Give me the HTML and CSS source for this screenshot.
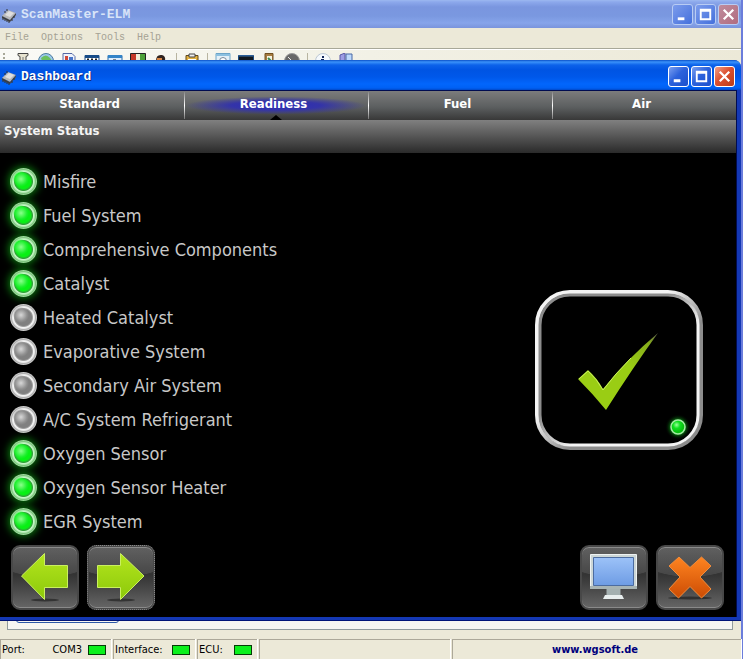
FILE: index.html
```html
<!DOCTYPE html>
<html lang="en">
  <head>
    <meta charset="utf-8">
    <title>ScanMaster-ELM</title>
    <meta name="viewport" content="width=device-width, initial-scale=1">
    <link rel="stylesheet" href="styles.css">
  </head>
  <body>
    <!-- shared gradients and symbols -->
    <svg class="defs" width="0" height="0" aria-hidden="true">
      <defs>
        <linearGradient id="green" x1="0" y1="0" x2="0" y2="1">
          <stop offset="0" stop-color="#b4e61e"/>
          <stop offset="1" stop-color="#8cc80a"/>
        </linearGradient>
        <linearGradient id="orange" x1="0" y1="0" x2="0" y2="1">
          <stop offset="0" stop-color="#ff8420"/>
          <stop offset="1" stop-color="#cc4c04"/>
        </linearGradient>
        <linearGradient id="screen" x1="0" y1="0" x2="0" y2="1">
          <stop offset="0" stop-color="#9cc2f8"/>
          <stop offset="1" stop-color="#6e9ce4"/>
        </linearGradient>
        <linearGradient id="bevelOut" x1="0" y1="0" x2="1" y2="1">
          <stop offset=".4" stop-color="#f4f4f4"/>
          <stop offset=".6" stop-color="#8c8c8c"/>
        </linearGradient>
        <linearGradient id="bevelIn" x1="0" y1="0" x2="1" y2="1">
          <stop offset=".4" stop-color="#8c8c8c"/>
          <stop offset=".6" stop-color="#f4f4f4"/>
        </linearGradient>
        <linearGradient id="tick" x1="0" y1="1" x2="1" y2="0">
          <stop offset=".6" stop-color="#9acd14"/>
          <stop offset=".88" stop-color="#86ac1c"/>
          <stop offset="1" stop-color="#5a5a50"/>
        </linearGradient>
        <radialGradient id="ball" cx=".4" cy=".35">
          <stop offset="0" stop-color="#9cff9c"/>
          <stop offset=".5" stop-color="#10e020"/>
          <stop offset="1" stop-color="#08c010"/>
        </radialGradient>
        <radialGradient id="glow">
          <stop offset=".5" stop-color="#0c8c14"/>
          <stop offset="1" stop-color="#000" stop-opacity="0"/>
        </radialGradient>
        <symbol id="chip" viewBox="0 0 16 16">
          <path d="M1 9l6-6 8 3-6 7z" fill="#b8b8b8"/>
          <path d="M1 9l8 4v2l-8-4zM9 13l6-7v2l-6 7z" fill="#4a4a4a"/>
          <path d="M4 8l4-4 5 2-4 4z" fill="#dedede"/>
          <path d="M2 10v3M4 11v3M6 12v3M8 13v3M11 12v2M13 9v2M4 6V4M6 4V2" stroke="#333"/>
        </symbol>
        <symbol id="min" viewBox="0 0 20 20"><path d="M5 13h7v3H5z" fill="#fff"/></symbol>
        <symbol id="max" viewBox="0 0 20 20"><path d="M4 4h12v12H4zM6 7v7h8V7z" fill="#fff" fill-rule="evenodd"/></symbol>
        <symbol id="close" viewBox="0 0 20 20"><path d="M5 5l10 10M15 5L5 15" stroke="#fff" stroke-width="2.4"/></symbol>
      </defs>
    </svg>

    <div class="app">
      <div class="titlebar inactive">
        <svg class="chip" width="16" height="16"><use href="#chip"/></svg>
        <h1>ScanMaster-ELM</h1>
        <button class="winbtn" aria-label="Minimize"><svg><use href="#min"/></svg></button>
        <button class="winbtn" aria-label="Maximize"><svg><use href="#max"/></svg></button>
        <button class="winbtn close" aria-label="Close"><svg><use href="#close"/></svg></button>
      </div>
      <div class="menu">
        <button>File</button>
        <button>Options</button>
        <button>Tools</button>
        <button>Help</button>
      </div>
      <div class="toolbar">
        <span class="grip"></span>
        <button aria-label="Connect"><svg viewBox="0 0 16 16"><path d="M3 .5h10v2l-2 1v12H5V3.500l-2-1z" fill="#e8e4d0" stroke="#444"/><path d="M8 4v12" stroke="#777"/></svg></button>
        <button aria-label="Globe"><svg viewBox="0 0 16 16"><circle cx="8" cy="8" r="7.500" fill="#9cc8ec" stroke="#4c7c9c"/><path d="M3 5q5-5 9 0l2 3H4z" fill="#6cc060"/></svg></button>
        <button aria-label="Report"><svg viewBox="0 0 16 16"><path d="M2 .5h9l3 3V16H2z" fill="#eef2fc" stroke="#5468a4"/><path d="M4 3h3v4H4z" fill="#d04838"/><path d="M8 4h4v3H8z" fill="#4874c8"/></svg></button>
        <button aria-label="Data grid"><svg viewBox="0 0 16 16"><path d="M1 2.500h14V15H1z" fill="#fff" stroke="#184c88"/><path d="M1 2h14v3H1z" fill="#184c88"/><path d="M3 6.500h2M7 6.500h2M11 6.500h2" stroke="#222" stroke-width="2"/></svg></button>
        <button aria-label="Window"><svg viewBox="0 0 16 16"><path d="M1 2.500h14V15H1z" fill="#dcecfc" stroke="#2468a8"/><path d="M1 2h14v3H1z" fill="#3484c8"/><path d="M6 7h3" stroke="#222"/></svg></button>
        <button aria-label="Dashboard"><svg viewBox="0 0 16 16"><path d="M.5.5h15V15H.5z" fill="#c43828" stroke="#222"/><path d="M6 1h5v6H6z" fill="#f0ecd8"/><path d="M10 1h5v7h-5z" fill="#4ca038"/></svg></button>
        <button aria-label="User"><svg viewBox="0 0 16 16"><path d="M3 8q0-7 6-6 4 1 3 6z" fill="#302420"/><path d="M4 5h5v6H4z" fill="#d88444"/></svg></button>
        <span class="sep"></span>
        <button aria-label="Clipboard"><svg viewBox="0 0 16 16"><path d="M2 2.500h12V16H2z" fill="#e0b040" stroke="#604818"/><path d="M5 1h6v3H5z" fill="#eee" stroke="#444"/><path d="M4 6h8v9H4z" fill="#fff"/></svg></button>
        <span class="sep"></span>
        <button aria-label="Search"><svg viewBox="0 0 16 16"><path d="M1 .5h14V15H1z" fill="#e4f0f8" stroke="#6ca4c8"/><path d="M1 1h14v2H1z" fill="#8cc0e0"/><circle cx="8" cy="8" r="3.500" fill="#fff" stroke="#789"/></svg></button>
        <button aria-label="Terminal"><svg viewBox="0 0 16 16"><path d="M.5 2.500h15V15H.5z" fill="#101820" stroke="#184880"/><path d="M1 3h14" stroke="#3c74b0"/></svg></button>
        <button aria-label="Chart"><svg viewBox="0 0 16 16"><path d="M4 .5h8V15H4z" fill="#a87c40" stroke="#705020"/><path d="M6 3h5v9H6z" fill="#f4f4e4"/><path d="M7 5l3 3" stroke="#3a8a50" stroke-width="2"/></svg></button>
        <button aria-label="Gauge"><svg viewBox="0 0 16 16"><circle cx="8" cy="8" r="7.500" fill="#686868" stroke="#999"/><path d="M4 4l5 5" stroke="#eee"/></svg></button>
        <span class="sep"></span>
        <button aria-label="Info"><svg viewBox="0 0 16 16"><circle cx="8" cy="8" r="7.500" fill="#f4f8fc" stroke="#bcc8d4"/><path d="M7 3h2v2H7zM6 6h3v6H6z" fill="#14285c"/></svg></button>
        <button aria-label="Exit"><svg viewBox="0 0 16 16"><path d="M2 2l5-2v15l-5 1z" fill="#9c9ce4" stroke="#5858a4"/><path d="M8 1h6v14H8z" fill="#bcd8fc" stroke="#4868a4"/></svg></button>
      </div>
      <div class="workspace">
        <div class="page"><div class="pane"></div></div>
      </div>
      <div class="statusbar">
        <div class="cell"><span>Port:</span><span class="value">COM3</span><i class="lamp"></i></div>
        <div class="cell"><span>Interface:</span><i class="lamp"></i></div>
        <div class="cell"><span>ECU:</span><i class="lamp"></i></div>
        <div class="cell"></div>
        <div class="cell site"><a href="#">www.wgsoft.de</a></div>
      </div>
    </div>

    <!-- Dashboard window floats over the main one -->
    <div class="dashboard">
      <div class="titlebar">
        <svg class="chip" width="16" height="16"><use href="#chip"/></svg>
        <h2>Dashboard</h2>
        <button class="winbtn" aria-label="Minimize"><svg><use href="#min"/></svg></button>
        <button class="winbtn" aria-label="Maximize"><svg><use href="#max"/></svg></button>
        <button class="winbtn close" aria-label="Close"><svg><use href="#close"/></svg></button>
      </div>
      <div class="client">
        <div class="tabs">
          <button>Standard</button>
          <button class="active">Readiness</button>
          <button>Fuel</button>
          <button>Air</button>
        </div>
        <h3>System Status</h3>
        <div class="status">
          <ul>
            <li><i class="led on"></i>Misfire</li>
            <li><i class="led on"></i>Fuel System</li>
            <li><i class="led on"></i>Comprehensive Components</li>
            <li><i class="led on"></i>Catalyst</li>
            <li><i class="led"></i>Heated Catalyst</li>
            <li><i class="led"></i>Evaporative System</li>
            <li><i class="led"></i>Secondary Air System</li>
            <li><i class="led"></i>A/C System Refrigerant</li>
            <li><i class="led on"></i>Oxygen Sensor</li>
            <li><i class="led on"></i>Oxygen Sensor Heater</li>
            <li><i class="led on"></i>EGR System</li>
          </ul>
          <svg class="result" width="168" height="160" viewBox="0 0 168 160" role="img" aria-label="Passed">
            <rect x="2" y="2" width="164" height="156" rx="33" fill="none" stroke="url(#bevelOut)" stroke-width="4"/>
            <rect x="5" y="5" width="158" height="150" rx="30" fill="none" stroke="url(#bevelIn)" stroke-width="3"/>
            <path d="M43 89l10-9q9 8 15 19Q92 69 123 43 99 76 71 120 58 104 43 89z" fill="url(#tick)"/>
            <path d="M44 89l9-8q9 8 15 19Q80 84 96 68" fill="none" stroke="#c8f060"/>
            <circle cx="143" cy="137" r="13" fill="url(#glow)"/>
            <circle cx="143" cy="137" r="7" fill="url(#ball)" stroke="#a4eca4" stroke-width="1.500"/>
          </svg>
        </div>
        <div class="actions">
          <button class="tile" aria-label="Back"><svg viewBox="0 0 68 65"><ellipse cx="34" cy="55" rx="14" ry="1.500" fill="#333"/><path d="M10.500 31l23-22.500v12h23v22h-23v12z" fill="url(#green)" stroke="#caf060"/></svg></button>
          <button class="tile focused" aria-label="Next"><svg viewBox="0 0 68 65"><ellipse cx="34" cy="55" rx="14" ry="1.500" fill="#333"/><path d="M57 31L33.500 8.500v12H10.500v22h23v12z" fill="url(#green)" stroke="#caf060"/></svg></button>
          <span class="space"></span>
          <button class="tile" aria-label="Display"><svg viewBox="0 0 68 65"><path d="M26.500 43h14v8h-14z" fill="#a4b0b0"/><path d="M25 50h17l2 4H23z" fill="#e8eeee"/><path d="M10.500 9.500h46v34h-46z" fill="#ccd6d6" stroke="#eef2f2"/><path d="M10 41h47v3H10z" fill="#a8b4b4"/><path d="M13.500 12.500h40v28h-40z" fill="url(#screen)" stroke="#4c6ca0"/></svg></button>
          <button class="tile" aria-label="Close dashboard"><svg viewBox="0 0 68 65"><ellipse cx="34" cy="53" rx="22" ry="1.500" fill="#303030"/><path d="M23 12L13 21l11 11-11 12 9.500 9L34 41.500 45.500 53l9.500-9-11-12 11-11-9.500-9L34 22.500z" fill="url(#orange)" stroke="#f08c3c" stroke-linejoin="round"/></svg></button>
        </div>
      </div>
    </div>
  </body>
</html>
```
FILE: styles.css
```css
*{
  box-sizing:border-box;
}
body{
  margin:0;
  background:#ece9d8;
  font-family:"DejaVu Sans Condensed", Tahoma, "DejaVu Sans", sans-serif;
  font-size:11px;
}
h1, h2, h3, ul{
  margin:0;
  padding:0;
}
button{
  margin:0;
  padding:0;
  border:0;
  background:none;
  font:inherit;
  color:inherit;
}
svg{
  display:block;
}
.defs{
  position:absolute;
}

/* main window */
.app{
  display:flex;
  flex-direction:column;
  min-height:100vh;
  border-right:2px solid #6b7ddb;
}
.titlebar{
  display:flex;
  align-items:center;
  gap:2px;
  height:30px;
  padding:3px 6px 0 1px;
  background:linear-gradient(#0a50c8 0, #3a92fa 2px, #0c62ea 5px, #0054e3 10px, #0058ea 17px, #0266fc 24px, #0060f4 28px, #0048c8 30px);
  color:#fff;
}
.titlebar h1, .titlebar h2{
  flex:1;
  margin-left:2px;
  font:bold 13px/16px "Liberation Mono", monospace;
  text-shadow:1px 1px #0c2c80;
}
.titlebar.inactive{
  height:28px;
  padding:1px 2px 0 1px;
  background:linear-gradient(#9cb8f0 0, #8ca8ec 2px, #7a96df 7px, #7a98e0 16px, #86a4ea 23px, #7a94dc 28px);
  color:#d8e4f8;
}
.titlebar.inactive h1{
  text-shadow:none;
}
.winbtn{
  width:21px;
  height:21px;
  border:1px solid #fff;
  border-radius:3px;
  background:linear-gradient(135deg, #7ca0f0, #2c62dc 45%, #1c50cc);
}
.winbtn svg{
  width:19px;
  height:19px;
}
.winbtn.close{
  background:linear-gradient(135deg, #f0a088, #dc5030 45%, #b83c18);
}
.inactive .winbtn{
  border-color:#b8ccf4;
  background:linear-gradient(135deg, #7c9cec, #4470dc);
}
.inactive .winbtn.close{
  background:linear-gradient(135deg, #c08c9c, #b06c80);
}
.menu{
  display:flex;
  gap:12px;
  height:21px;
  padding:0 5px;
  border-bottom:1px solid #a8a898;
  color:#a5a294;
  font:10px/20px "Liberation Mono", monospace;
}
.toolbar{
  display:flex;
  align-items:flex-start;
  height:30px;
  padding:3px 0 0 3px;
  border-top:1px solid #fff;
  background:linear-gradient(90deg, #fafaf6, #f2f1e6 50%, #ece9d8);
}
.toolbar button{
  display:flex;
  justify-content:center;
  width:23px;
}
.toolbar svg{
  width:16px;
  height:16px;
}
.grip{
  width:8px;
  height:20px;
  background:radial-gradient(circle at 1px 1px, #a8a898 1px, transparent 1px) 0 0/8px 4px;
}
.sep{
  width:8px;
  height:20px;
  background:linear-gradient(#b8b4a0, #b8b4a0) center/1px 100% no-repeat;
}
.workspace{
  display:flex;
  flex:1;
  padding:0 8px 9px 7px;
}
.page{
  display:flex;
  flex:1;
  padding:0 8px 6px;
  border:1px solid #919b9c;
  border-top:0;
  background:#f6f6f2;
}
.pane{
  width:103px;
  border:1px solid #2c58a8;
  border-radius:3px;
}
.statusbar{
  display:grid;
  grid-template-columns:111px 82px 60px 191px 1fr;
  gap:2px;
  height:20px;
}
.cell{
  display:flex;
  align-items:center;
  justify-content:space-between;
  padding:0 5px 0 1px;
  border:solid #aca899;
  border-width:1px 0 0 1px;
  box-shadow:1px 0 #fff;
}
.value{
  flex:1;
  padding-right:6px;
  text-align:right;
}
.lamp{
  width:18px;
  height:10px;
  border:1px solid #063c06;
  background:#0cf01c;
}
.cell.site{
  justify-content:center;
}
.site a{
  color:#00007c;
  font-weight:bold;
  text-decoration:none;
}

/* dashboard window */
.dashboard{
  position:absolute;
  top:60px;
  left:0;
  right:2px;
  overflow:hidden;
  border-radius:0 7px 0 0;
  background:#1438b4;
}
.client{
  margin:0 4px 4px 0;
  border:solid #000c50;
  border-width:1px 1px 0 0;
  background:#000;
  color:#c8c8c8;
}
.dashboard::after{
  content:"";
  display:block;
  height:1px;
  margin-top:-1px;
  background:#001478;
}
.tabs{
  display:grid;
  grid-template-columns:repeat(4, 1fr);
  height:29px;
  background:linear-gradient(#7c7c7c, #5c5f60 55%, #383838);
}
.tabs button{
  position:relative;
  padding:0 5px 4px 0;
  color:#fff;
  font-size:13px;
  font-weight:bold;
}
.tabs button + button{
  background:linear-gradient(#888, #fff 50%, #777) left/1px 27px no-repeat;
}
.tabs button.active{
  background:
    linear-gradient(#888, #fff 50%, #777) left/1px 27px no-repeat,
    radial-gradient(ellipse 90px 9px at 50% 50%, #2c2cb4 10%, #3434a8 50%, transparent);
}
.tabs .active::after{
  content:"";
  position:absolute;
  left:50%;
  bottom:0;
  margin-left:-6px;
  border:6px solid transparent;
  border-width:0 6px 5px;
  border-bottom-color:#000;
}
.client h3{
  height:33px;
  padding:0 4px;
  background:linear-gradient(#808080, #2a2a2a);
  color:#f4f4f4;
  font-size:13px;
  line-height:21px;
}
.status{
  display:flex;
  justify-content:space-between;
  align-items:center;
  padding:11px 33px 7px 10px;
}
.status ul{
  list-style:none;
}
.status li{
  display:flex;
  align-items:center;
  gap:6px;
  height:34px;
  font-size:18px;
}
.result{
  margin-top:37px;
}
.led{
  width:27px;
  height:27px;
  border-radius:50%;
  background:
    radial-gradient(circle at 11px 11px, #d8d8d8 0, #909090 6px, transparent 8px),
    radial-gradient(circle at 50% 50%, #808080 8px, #a0a0a0 9px, #f4f4f4 10px, #e8e8e8 11px, #b0b0b0 12px, #c8c8c8 13px);
}
.led.on{
  background:
    radial-gradient(circle at 11px 11px, #8cff8c 0, #1cf02c 6px, transparent 8px),
    radial-gradient(circle at 50% 50%, #08f014 7px, #30a038 9px, #c8f8c8 10px, #b0e8b0 11px, #80c480 12px, #98dc98 13px);
  box-shadow:0 0 8px 1px #0c8c10;
}
.actions{
  display:flex;
  gap:8px;
  padding:0 12px 7px 11px;
}
.space{
  flex:1;
}
.tile{
  width:68px;
  height:65px;
  border:2px solid #484848;
  border-radius:9px;
  background:
    radial-gradient(ellipse 60px 30px at 50% 0, #ffffff18 98%, transparent),
    linear-gradient(#505050, #343434 45%, #404040 60%, #666);
  box-shadow:inset 0 1px #8a8a8a, inset 0 -1px #8a8a8a;
}
.tile svg{
  width:68px;
  height:65px;
  margin:-2px;
}
.tile.focused{
  outline:1px dotted #888;
  outline-offset:-1px;
}
```
